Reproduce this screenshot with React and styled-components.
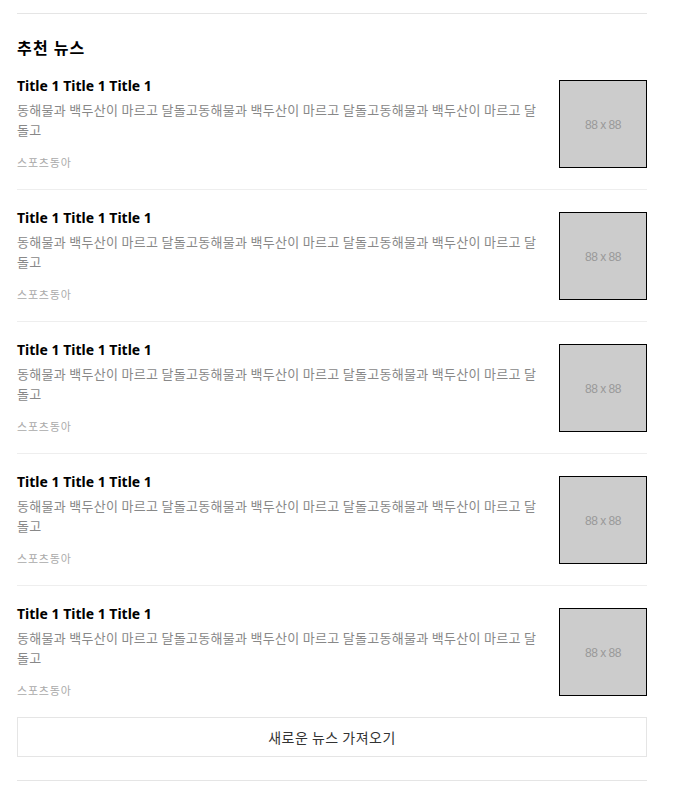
import React from "react";
import styled, { createGlobalStyle } from "styled-components";

const Global = createGlobalStyle`
  body { margin: 0; background: #fff; font-family: "Noto Sans", "Noto Sans CJK KR", sans-serif; }
`;

const Page = styled.div`
  padding: 13px 26px 0 17px;
  width: 630px;
`;

const Rule = styled.hr`
  margin: 0;
  border: 0;
  border-top: 1px solid #e5e5e5;
`;

const Heading = styled.h2`
  margin: 21px 0 0;
  font-size: 16px;
  line-height: 24px;
  font-weight: 700;
  letter-spacing: 1.2px;
  color: #000;
  font-family: "Noto Sans CJK KR", sans-serif;
`;

const List = styled.ul`
  list-style: none;
  margin: 9px 0 0;
  padding: 0;
`;

const Item = styled.li`
  display: flex;
  align-items: flex-start;
  gap: 16px;
  padding: ${(p) => (p.$first ? "12px" : "22px")} 0 21px;
  border-bottom: ${(p) => (p.$last ? "none" : "1px solid #eeeeee")};
`;

const Text = styled.div`
  flex: 1;
  min-width: 0;
  margin-top: -4px;
`;

const Title = styled.h3`
  margin: 0;
  font-size: 14px;
  line-height: 20px;
  font-weight: 700;
  color: #000;
`;

const Desc = styled.p`
  margin: 4px 0 0;
  font-size: 13px;
  line-height: 20px;
  letter-spacing: 0.3px;
  color: #888;
  font-family: "Noto Sans CJK KR", sans-serif;
`;

const Source = styled.span`
  display: block;
  margin-top: 16px;
  font-size: 11px;
  line-height: 12px;
  letter-spacing: 0.8px;
  color: #aaa;
  font-family: "Noto Sans CJK KR", sans-serif;
`;

const Thumb = styled.div`
  flex: none;
  box-sizing: border-box;
  width: 88px;
  height: 88px;
  padding-top: 2px;
  border: 1px solid #000;
  background: #cccccc;
  display: flex;
  align-items: center;
  justify-content: center;
  color: #999;
  font-size: 12px;
  letter-spacing: -0.5px;
  font-family: "Liberation Sans", sans-serif;
`;

const MoreButton = styled.button`
  display: block;
  width: 100%;
  height: 40px;
  box-sizing: border-box;
  border: 1px solid #e5e5e5;
  background: #fff;
  color: #333;
  font-size: 14px;
  letter-spacing: 0.5px;
  font-family: "Noto Sans CJK KR", sans-serif;
  cursor: pointer;
`;

const Bottom = styled(Rule)`
  margin-top: 23px;
`;

const items = Array.from({ length: 5 }, (_, i) => i);
const desc =
  "동해물과 백두산이 마르고 달돌고동해물과 백두산이 마르고 달돌고동해물과 백두산이 마르고 달돌고";

export default function App() {
  return (
    <>
      <Global />
      <Page>
        <Rule />
        <Heading>추천 뉴스</Heading>
        <List>
          {items.map((i) => (
            <Item key={i} $first={i === 0} $last={i === items.length - 1}>
              <Text>
                <Title>Title 1 Title 1 Title 1</Title>
                <Desc>{desc}</Desc>
                <Source>스포츠동아</Source>
              </Text>
              <Thumb>88 x 88</Thumb>
            </Item>
          ))}
        </List>
        <MoreButton>새로운 뉴스 가져오기</MoreButton>
        <Bottom />
      </Page>
    </>
  );
}
